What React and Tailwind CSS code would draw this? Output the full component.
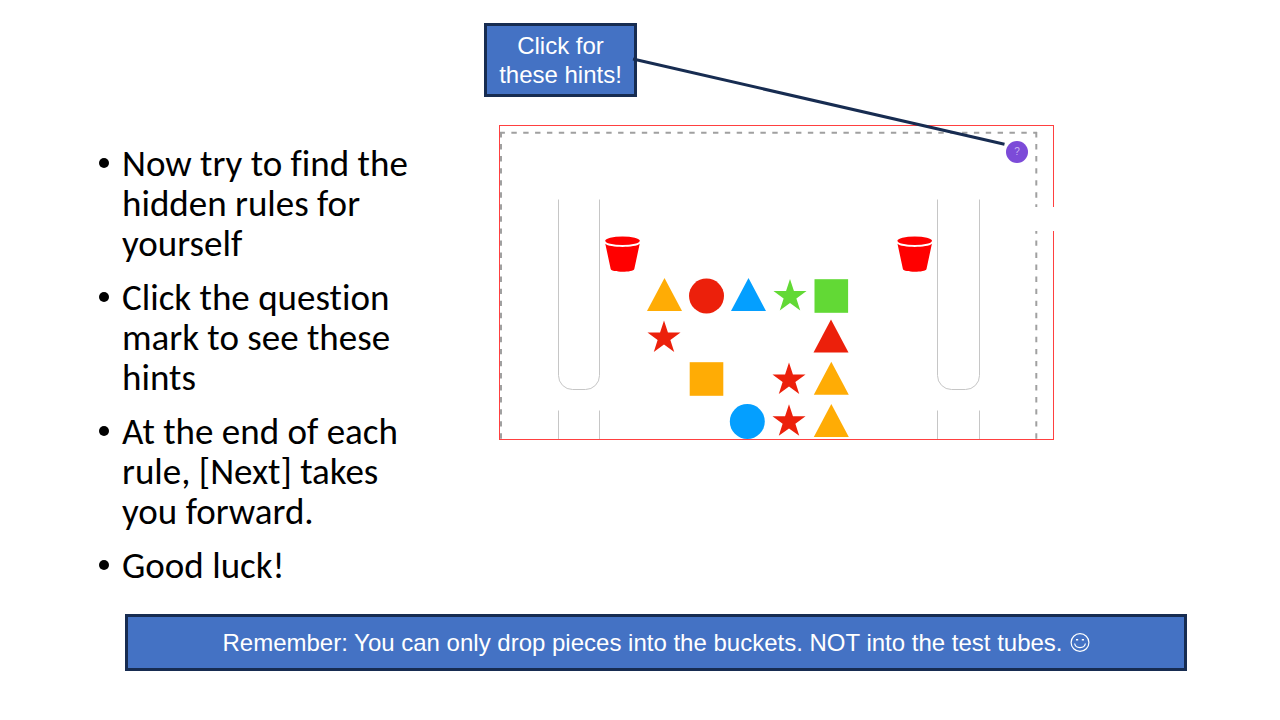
const COLORS = {
  amber: '#ffac05',
  red: '#ec200b',
  blue: '#049fff',
  green: '#62d935',
};

// Each piece is given by its centre on the board.
const PIECES = [
  { kind: 'triangle', color: 'amber', x: 165.5, y: 170 },
  { kind: 'circle', color: 'red', x: 207.5, y: 171 },
  { kind: 'triangle', color: 'blue', x: 249.5, y: 170 },
  { kind: 'star', color: 'green', x: 291, y: 171 },
  { kind: 'square', color: 'green', x: 332.3, y: 171 },
  { kind: 'star', color: 'red', x: 165, y: 212.5 },
  { kind: 'triangle', color: 'red', x: 332, y: 211.5 },
  { kind: 'square', color: 'amber', x: 207.5, y: 254 },
  { kind: 'star', color: 'red', x: 290, y: 254.5 },
  { kind: 'triangle', color: 'amber', x: 332.3, y: 253.7 },
  { kind: 'circle', color: 'blue', x: 248.3, y: 296.5 },
  { kind: 'star', color: 'red', x: 290, y: 296.3 },
  { kind: 'triangle', color: 'amber', x: 332.3, y: 295.9 },
];

const STAR_POINTS = Array.from({ length: 10 }, (_, i) => {
  const radius = i % 2 === 0 ? 17.4 : 6.7;
  const angle = (i * Math.PI) / 5;
  return `${(radius * Math.sin(angle)).toFixed(2)},${(0.4 - radius * Math.cos(angle)).toFixed(2)}`;
}).join(' ');

function Piece({ kind, color, x, y }) {
  const fill = COLORS[color];
  return (
    <g transform={`translate(${x} ${y})`} fill={fill}>
      {kind === 'triangle' && <polygon points="0,-17 17.5,16 -17.5,16" />}
      {kind === 'circle' && <circle r="17.5" />}
      {kind === 'square' && <rect x="-16.8" y="-16.8" width="33.6" height="33.6" />}
      {kind === 'star' && <polygon points={STAR_POINTS} />}
    </g>
  );
}

function Bucket({ x }) {
  return (
    <g transform={`translate(${x} 111)`} fill="#ff0000">
      <ellipse cx="0" cy="4.8" rx="17.3" ry="4.3" />
      <path d="M-17.2 7.8C-13 12 13 12 17.2 7.8L11.8 33C10.8 36.7 -10.8 36.7 -11.8 33Z" />
    </g>
  );
}

function Tube({ x, width }) {
  return (
    <g fill="none" stroke="#c6c6c6" strokeWidth="1">
      <path
        d={`M${x} 74.5V250.5a14 14 0 0 0 14 14h${width - 28}a14 14 0 0 0 14 -14V74.5`}
      />
      <path d={`M${x} 285.5V314M${x + width} 285.5V314`} />
    </g>
  );
}

function Board() {
  return (
    <svg viewBox="0 0 555 315" className="block w-full" role="img" aria-label="Game board">
      <g fill="none" stroke="#a0a0a0" strokeWidth="2">
        <path d="M0.5 7.8H538" strokeDasharray="5.4 6.46" />
        <path d="M2 7V314" strokeDasharray="5.4 6.65" />
        <path d="M537.3 7V314" strokeDasharray="5.4 6.65" />
      </g>
      <Tube x={59.5} width={41} />
      <Tube x={438.5} width={42} />
      <Bucket x={123.5} />
      <Bucket x={415.7} />
      {PIECES.map((piece) => (
        <Piece key={`${piece.x}-${piece.y}`} {...piece} />
      ))}
      <rect x="0.5" y="0.5" width="554" height="314" fill="none" stroke="#ff4040" />
      <rect x="534" y="82" width="21" height="24" fill="#ffffff" />
    </svg>
  );
}

function Smiley() {
  return (
    <svg viewBox="0 0 20 20" className="h-5 w-5" fill="none" stroke="#ffffff" aria-hidden="true">
      <circle cx="10" cy="9.5" r="8.9" strokeWidth="1.2" />
      <path d="M4.6 10.5C5.6 15.9 14.4 15.9 15.4 10.5" strokeWidth="1.2" />
      <path d="M6 6.7h2.2M11.8 6.7H14" strokeWidth="1.6" />
    </svg>
  );
}

const STEPS = [
  'Now try to find the hidden rules for yourself',
  'Click the question mark to see these hints',
  'At the end of each rule, [Next] takes you forward.',
  'Good luck!',
];

export default function App() {
  return (
    <main className="min-h-screen bg-white pt-[23px] font-['Liberation_Sans',Arial,sans-serif]">
      <div className="flex h-[591px] items-start">
        <ul className="ml-[98px] mt-[121px] flex w-[330px] shrink-0 flex-col gap-[14px] font-['Carlito',Lato,sans-serif] text-[37px] leading-[40px] text-black [font-variant-ligatures:none]">
          {STEPS.map((step) => (
            <li key={step} className="flex gap-3">
              <span className="mt-[13px] h-3 w-3 shrink-0 p-px" aria-hidden="true">
                <span className="block h-full w-full rounded-full bg-black" />
              </span>
              <span>{step}</span>
            </li>
          ))}
        </ul>

        <section className="relative ml-14 w-[570px]">
          <div className="flex h-[74px] w-[153px] items-center justify-center border-[3px] border-[#172c51] bg-[#4472c4] text-center text-2xl leading-[29px] text-white">
            <p>
              Click for
              <br />
              these hints!
            </p>
          </div>
          <div className="relative ml-[15px] mt-7">
            <Board />
            <button
              type="button"
              aria-label="Show hints"
              className="absolute right-[26px] top-4 flex h-[22px] w-[22px] items-center justify-center rounded-full bg-[#7c4bd8] text-[10px] leading-none text-[#c9b3f2]"
            >
              ?
            </button>
          </div>
          <svg
            viewBox="0 0 570 130"
            className="pointer-events-none absolute left-0 top-0 w-full"
            aria-hidden="true"
          >
            <path d="M149 36L520.5 121.3" stroke="#172c51" strokeWidth="3" />
          </svg>
        </section>
      </div>

      <footer className="ml-[125px] mr-[93px] flex h-[57px] items-center justify-center gap-[7px] border-[3px] border-[#172c51] bg-[#4472c4] text-2xl text-white">
        <p>Remember: You can only drop pieces into the buckets. NOT into the test tubes.</p>
        <Smiley />
      </footer>
    </main>
  );
}
